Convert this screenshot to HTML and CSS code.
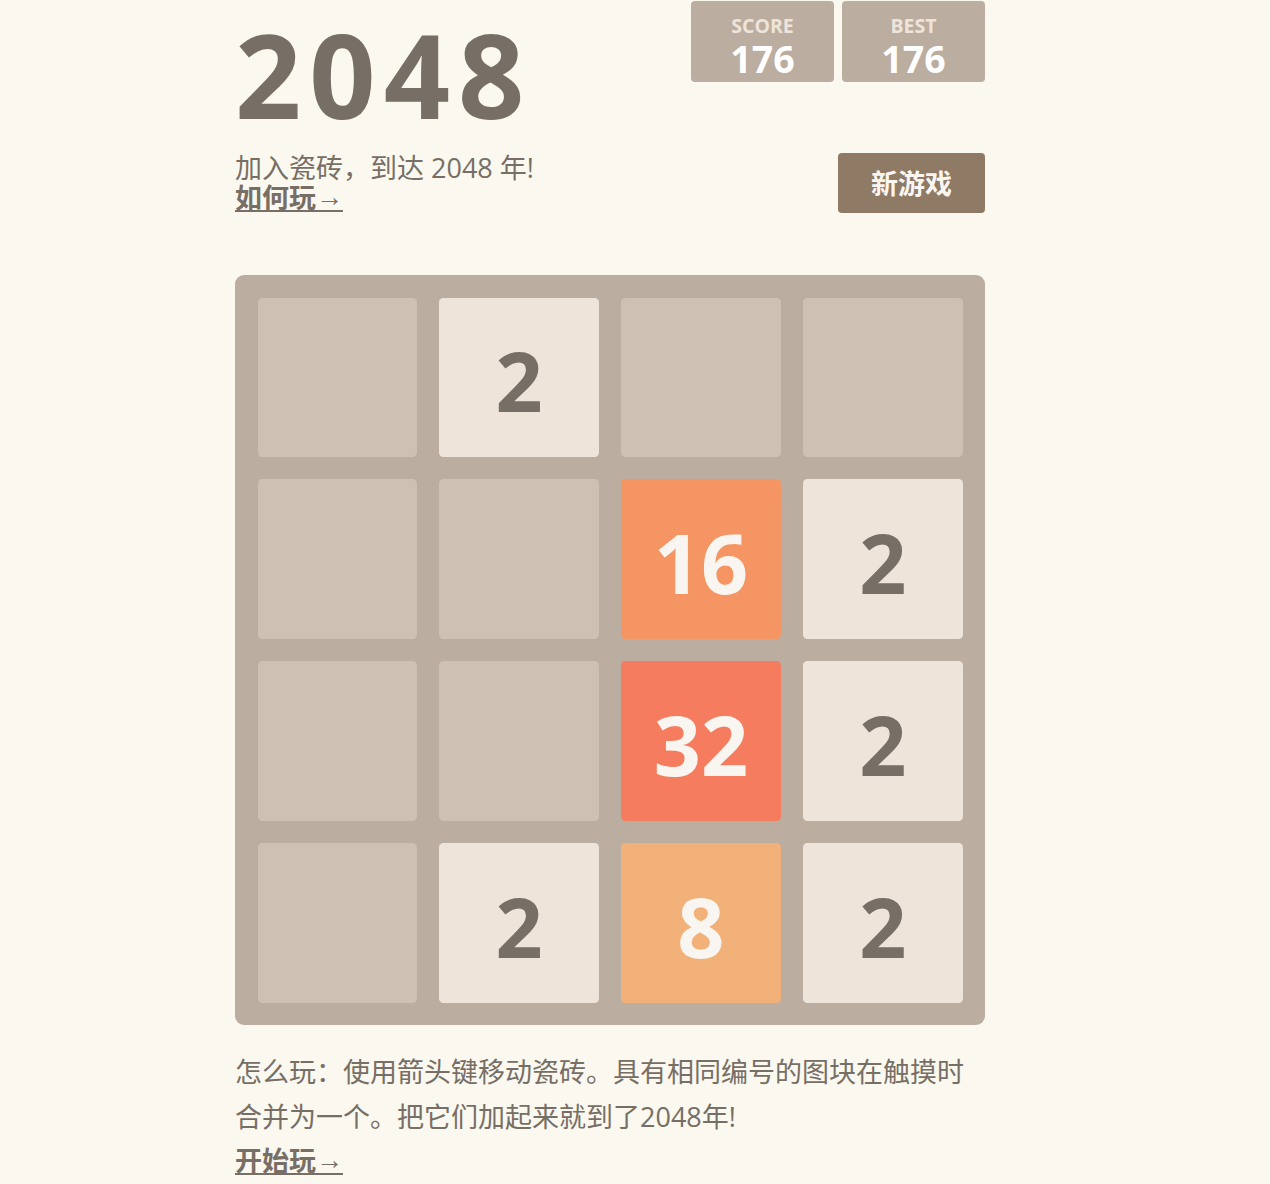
FILE: index.html
```html
<!DOCTYPE html>
<html lang="zh">
<head>
<meta charset="utf-8">
<title>2048</title>
<link rel="stylesheet" href="styles.css">
</head>
<body>
<div class="container">
  <div class="heading">
    <h1 class="title">2048</h1>
    <div class="scores">
      <div class="score-box">
        <div class="score-label">SCORE</div>
        <div class="score-value">176</div>
      </div>
      <div class="score-box">
        <div class="score-label">BEST</div>
        <div class="score-value">176</div>
      </div>
    </div>
  </div>
  <div class="intro-row">
    <p class="intro">加入瓷砖，到达 2048 年!<br><a class="link" href="#">如何玩<span class="arrow">→</span></a></p>
    <a class="restart" href="#">新游戏</a>
  </div>
  <div class="board">
    <div class="cell"></div>
    <div class="cell t2">2</div>
    <div class="cell"></div>
    <div class="cell"></div>

    <div class="cell"></div>
    <div class="cell"></div>
    <div class="cell t16">16</div>
    <div class="cell t2">2</div>

    <div class="cell"></div>
    <div class="cell"></div>
    <div class="cell t32">32</div>
    <div class="cell t2">2</div>

    <div class="cell"></div>
    <div class="cell t2">2</div>
    <div class="cell t8">8</div>
    <div class="cell t2">2</div>
  </div>
  <p class="explanation">怎么玩：使用箭头键移动瓷砖。具有相同编号的图块在触摸时合并为一个。把它们加起来就到了2048年!<br><a class="link" href="#">开始玩<span class="arrow">→</span></a></p>
</div>
</body>
</html>
```
FILE: styles.css
```css
html, body {
  margin: 0;
  padding: 0;
  background: #faf8ef;
  color: #776e65;
  font-family: "Open Sans", "Noto Sans CJK SC", sans-serif;
}

.container {
  width: 750px;
  margin: 0 0 0 235px;
  padding-top: 1px;
}

.heading {
  display: flex;
  justify-content: space-between;
  align-items: flex-start;
  height: 131px;
}

.title {
  margin: 13px 0 0 0;
  font-size: 116px;
  line-height: 120px;
  letter-spacing: 8px;
  font-weight: 700;
  color: #776e65;
}

.scores {
  display: flex;
  gap: 8px;
}

.score-box {
  width: 143px;
  height: 81px;
  box-sizing: border-box;
  padding-top: 15px;
  background: #bbada0;
  border-radius: 4px;
  text-align: center;
  font-weight: 700;
}

.score-label {
  font-size: 19.5px;
  line-height: 20px;
  color: #eee4da;
}

.score-value {
  margin-top: 4px;
  font-size: 37.5px;
  line-height: 38px;
  color: #ffffff;
}

.intro-row {
  display: flex;
  justify-content: space-between;
  align-items: flex-start;
  margin-top: 21px;
}

.intro {
  margin: 0;
  font-size: 27px;
  line-height: 30px;
}

.link {
  color: #776e65;
  font-weight: 700;
  text-decoration: underline;
}

.arrow {
  font-family: "Liberation Sans", sans-serif;
  font-weight: 400;
  line-height: 0;
  vertical-align: 2px;
}

.restart {
  display: block;
  width: 147px;
  height: 60px;
  box-sizing: border-box;
  padding-top: 2px;
  line-height: 58px;
  background: #8f7a66;
  color: #f9f6f2;
  border-radius: 4px;
  text-align: center;
  text-decoration: none;
  font-size: 27px;
  font-weight: 700;
}

.board {
  margin-top: 62px;
  width: 750px;
  height: 750px;
  box-sizing: border-box;
  padding: 22.5px;
  background: #bbada0;
  border-radius: 9px;
  display: grid;
  grid-template-columns: repeat(4, 1fr);
  grid-template-rows: repeat(4, 1fr);
  gap: 22.5px;
}

.cell {
  background: #cdc1b4;
  border-radius: 4.5px;
  display: flex;
  align-items: center;
  justify-content: center;
  font-size: 82.5px;
  font-weight: 700;
  line-height: 1;
  padding-top: 6px;
  box-sizing: border-box;
}

.t2 { background: #eee4da; color: #776e65; }
.t8 { background: #f2b179; color: #f9f6f2; }
.t16 { background: #f59563; color: #f9f6f2; }
.t32 { background: #f67c5f; color: #f9f6f2; }

.explanation {
  margin: 25px 0 0 0;
  font-size: 27px;
  line-height: 44.5px;
}
```
